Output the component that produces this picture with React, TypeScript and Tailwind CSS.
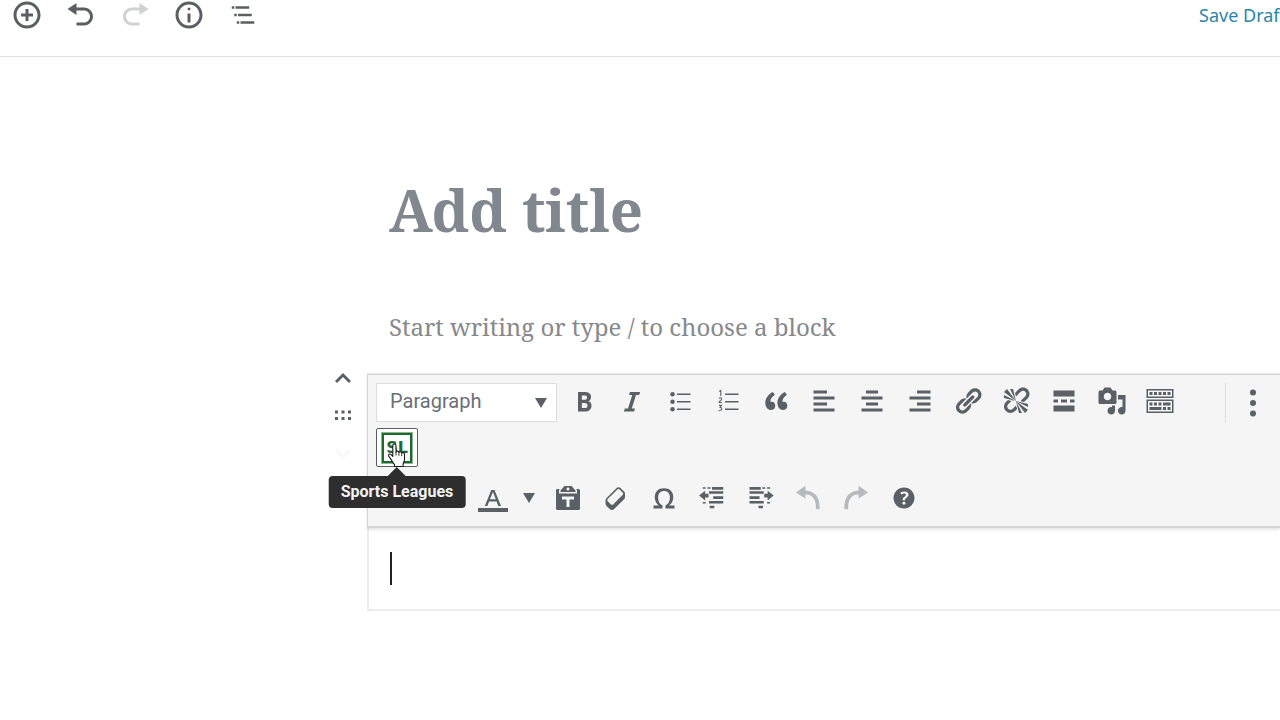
import type { ReactNode } from "react";

type IconProps = { children: ReactNode; box?: string; className?: string };

function Icon({ children, box = "0 0 20 20", className = "size-[30px]" }: IconProps) {
  return (
    <svg viewBox={box} className={className} fill="currentColor" aria-hidden="true">
      {children}
    </svg>
  );
}

function HeaderButton({ label, disabled, children }: { label: string; disabled?: boolean; children: ReactNode }) {
  return (
    <button
      type="button"
      aria-label={label}
      disabled={disabled}
      className="flex h-[30px] w-[54px] shrink-0 items-center justify-center text-[#5a5f63] disabled:text-[#d0d2d2]"
    >
      {children}
    </button>
  );
}

function ToolButton({ label, disabled, children }: { label: string; disabled?: boolean; children: ReactNode }) {
  return (
    <button
      type="button"
      aria-label={label}
      disabled={disabled}
      className="flex h-9 w-12 shrink-0 items-center justify-center text-[#5a6066] disabled:text-[#b6babd]"
    >
      {children}
    </button>
  );
}

const indentBars =
  "M3.800 2.900h2v1h-2zM7 2.900h2v1H7zM10 2.700h7.500v1.800H10zM8 5.500h9.500v1.700H8zM10.800 8.900h6.700v1.700h-6.700zM8 12h9.500v1.700H8zM3.800 12.600h2v1h-2zM8.500 15.200h3v1.700h-3zM1.400 8.400l4-3.300v2h2.300v2.600H5.400v2z";

const formatting: { label: string; icon: ReactNode }[] = [
  {
    label: "Bold",
    icon: (
      <path
        fillRule="evenodd"
        d="M6 4v13h4.54c1.37 0 2.46-.33 3.26-1 .8-.66 1.2-1.58 1.2-2.77 0-.84-.17-1.51-.51-2.01s-.9-.85-1.67-1.03v-.09c.57-.1 1.02-.4 1.36-.9s.51-1.13.51-1.91c0-1.14-.39-1.98-1.17-2.5C12.75 4.26 11.5 4 9.78 4H6zm2.57 5.15V6.26h1.36c.73 0 1.27.11 1.61.32.34.22.51.58.51 1.07 0 .54-.16.92-.47 1.15s-.82.35-1.51.35h-1.5zm0 2.19h1.6c1.44 0 2.16.53 2.16 1.61 0 .6-.17 1.05-.51 1.34s-.86.43-1.57.43H8.57v-3.38z"
      />
    ),
  },
  { label: "Italic", icon: <path d="M14.78 6h-2.13l-2.8 9h2.12l-.62 2H4.6l.62-2h2.14l2.8-9H8.03l.62-2h6.75z" /> },
  {
    label: "Bulleted list",
    icon: (
      <>
        <circle cx="5" cy="5.500" r="1.500" />
        <circle cx="5" cy="10.500" r="1.500" />
        <circle cx="5" cy="15.500" r="1.500" />
        <path d="M8 5h9v1H8zM8 10h9v1H8zM8 15h9v1H8z" />
      </>
    ),
  },
  {
    label: "Numbered list",
    icon: (
      <>
        <path d="M8 5h9v1H8zM8 10h9v1H8zM8 15h9v1H8z" />
        <path
          fill="none"
          stroke="currentColor"
          strokeWidth=".7"
          d="M4.200 3.700l1-.7v3.600M4 8.300c.4-.6 1.800-.6 1.800.3 0 .8-1.800 1.500-1.800 2.400h2M4 12.900h1.700l-1 1.300c1.600.1 1.600 2.500-.9 2.100"
        />
      </>
    ),
  },
  {
    label: "Blockquote",
    icon: (
      <path d="M9.49 13.22c0-.74-.2-1.38-.61-1.9-.62-.78-1.83-.88-2.53-.72-.29-1.65 1.11-3.75 2.92-4.65L7.88 4c-2.73 1.3-5.42 4.28-4.96 8.05C3.21 14.43 4.59 16 6.54 16c.85 0 1.56-.25 2.12-.75s.83-1.18.83-2.03zm8.05 0c0-.74-.2-1.38-.61-1.9-.63-.78-1.83-.88-2.53-.72-.29-1.65 1.11-3.75 2.92-4.65L15.93 4c-2.73 1.3-5.41 4.28-4.95 8.05.29 2.38 1.66 3.95 3.61 3.95.85 0 1.56-.25 2.12-.75s.83-1.18.83-2.03z" />
    ),
  },
  { label: "Align left", icon: <path d="M12 5V3H3v2h9zm5 4V7H3v2h14zm-5 4v-2H3v2h9zm5 4v-2H3v2h14z" /> },
  { label: "Align center", icon: <path d="M14 5V3H6v2h8zm3 4V7H3v2h14zm-3 4v-2H6v2h8zm3 4v-2H3v2h14z" /> },
  { label: "Align right", icon: <path d="M17 5V3H8v2h9zm0 4V7H3v2h14zm0 4v-2H8v2h9zm0 4v-2H3v2h14z" /> },
  {
    label: "Insert link",
    icon: (
      <path d="M17.74 2.76c1.68 1.69 1.68 4.41 0 6.1l-1.53 1.52c-1.12 1.12-2.7 1.47-4.14 1.09l2.62-2.61.76-.77.76-.76c.84-.84.84-2.2 0-3.04-.84-.85-2.2-.85-3.04 0l-.77.76-3.38 3.38c-.37-1.44-.02-3.02 1.1-4.14l1.52-1.53c1.69-1.68 4.42-1.68 6.1 0zM8.59 13.43l5.34-5.34c.42-.42.42-1.1 0-1.52-.44-.43-1.13-.39-1.53 0l-5.33 5.34c-.42.42-.42 1.1 0 1.52.44.43 1.13.39 1.52 0zm-.76 2.29l4.14-4.15c.38 1.44.03 3.02-1.09 4.14l-1.52 1.53c-1.69 1.68-4.41 1.68-6.1 0-1.68-1.68-1.68-4.42 0-6.1l1.53-1.52c1.12-1.12 2.7-1.47 4.14-1.1l-4.14 4.15c-.85.84-.85 2.2 0 3.05.84.84 2.2.84 3.04 0z" />
    ),
  },
  {
    label: "Remove link",
    icon: (
      <path d="M17.74 2.26c1.68 1.69 1.68 4.41 0 6.1l-1.53 1.52c-.32.33-.69.58-1.08.77L13 10l1.69-1.64.76-.77.76-.76c.84-.84.84-2.2 0-3.04-.84-.85-2.2-.85-3.04 0l-.77.76-.76.76L10 7l-.65-2.14c.19-.38.44-.75.77-1.07l1.52-1.53c1.69-1.68 4.42-1.68 6.1 0zM2 4l8 6-6-8zm4-2l4 8-2-8H6zM2 6l8 4-8-2V6zm7.36 7.69L10 13l.74 2.35-1.38 1.39c-1.69 1.68-4.41 1.68-6.1 0-1.68-1.68-1.68-4.42 0-6.1l1.39-1.38L7 10l-.69.64-1.52 1.53c-.85.84-.85 2.2 0 3.04.84.85 2.2.85 3.04 0zM18 16l-8-6 6 8zm-4 2l-4-8 2 8h2zm4-4l-8-4 8 2v2z" />
    ),
  },
  {
    label: "Insert read more tag",
    icon: <path d="M17 7V3H3v4h14zM6 11V9H3v2h3zm6 0V9H8v2h4zm5 0V9h-3v2h3zm0 6v-4H3v4h14z" />,
  },
  {
    label: "Add media",
    icon: (
      <path
        fillRule="evenodd"
        d="M13 11V4c0-.55-.45-1-1-1h-1.67L9 1H5L3.67 3H2c-.55 0-1 .45-1 1v7c0 .55.45 1 1 1h10c.55 0 1-.45 1-1zM7 4.5c1.38 0 2.5 1.12 2.5 2.5S8.38 9.5 7 9.5 4.5 8.38 4.5 7 5.62 4.5 7 4.5zM14 6h5v10.5c0 1.38-1.12 2.5-2.5 2.5S14 17.88 14 16.5s1.12-2.5 2.5-2.5c.17 0 .34.02.5.05V9h-3V6zm-4 8.05V13h2v3.5c0 1.38-1.12 2.5-2.5 2.5S7 17.88 7 16.5 8.12 14 9.5 14c.17 0 .34.02.5.05z"
      />
    ),
  },
  {
    label: "Toolbar toggle",
    icon: (
      <path
        fillRule="evenodd"
        d="M19 2v6H1V2h18zm-1 5V3H2v4h16zM5 4v2H3V4h2zm3 0v2H6V4h2zm3 0v2H9V4h2zm3 0v2h-2V4h2zm3 0v2h-2V4h2zM19 9v9H1V9h18zm-1 8v-7H2v7h16zM5 11v2H3v-2h2zm3 0v2H6v-2h2zm3 0v2H9v-2h2zm6 0v2h-5v-2h5zm-6 3v2H3v-2h8zm3 0v2h-2v-2h2zm3 0v2h-2v-2h2z"
      />
    ),
  },
];

const advanced: { label: string; disabled?: boolean; icon: ReactNode }[] = [
  {
    label: "Paste as text",
    icon: (
      <path
        fillRule="evenodd"
        d="M12.38 2L15 5v1H5V5l2.64-3h4.74zM10 5c.55 0 1-.44 1-1 0-.55-.45-1-1-1s-1 .45-1 1c0 .56.45 1 1 1zm5.45-1H17c.55 0 1 .45 1 1v12c0 .56-.45 1-1 1H3c-.55 0-1-.44-1-1V5c0-.55.45-1 1-1h1.55L4 4.63V7h12V4.63zM14 11V9H6v2h3v5h2v-5h3z"
      />
    ),
  },
  {
    label: "Clear formatting",
    icon: (
      <path
        fillRule="evenodd"
        d="M14.29 4.59l1.1 1.11c.41.4.61.94.61 1.47v2.12c0 .53-.2 1.07-.61 1.47l-6.63 6.63c-.4.41-.94.61-1.47.61s-1.07-.2-1.47-.61l-1.11-1.1-1.1-1.11c-.41-.4-.61-.94-.61-1.47v-2.12c0-.54.2-1.07.61-1.48l6.63-6.62c.4-.41.94-.61 1.47-.61s1.06.2 1.47.61zm-6.21 9.7l6.42-6.42c.39-.39.39-1.03 0-1.43L12.36 4.3c-.19-.19-.45-.29-.72-.29s-.52.1-.71.29l-6.42 6.42c-.39.4-.39 1.04 0 1.43l2.14 2.14c.38.38 1.04.38 1.43 0z"
      />
    ),
  },
  {
    label: "Special character",
    icon: (
      <path d="M10 5.4c1.27 0 2.24.36 2.91 1.08.66.71 1 1.76 1 3.13 0 1.28-.23 2.37-.69 3.27-.47.89-1.27 1.52-2.22 2.12v2h6v-2h-3.69c.92-.64 1.62-1.34 2.12-2.34.49-1.01.74-2.13.74-3.35 0-1.78-.55-3.19-1.65-4.22S11.92 3.54 10 3.54s-3.43.53-4.52 1.57c-1.1 1.04-1.65 2.44-1.65 4.2 0 1.21.24 2.31.73 3.33.48 1.01 1.19 1.71 2.1 2.36H3v2h6v-2c-.98-.64-1.8-1.28-2.24-2.17-.45-.89-.67-1.96-.67-3.22 0-1.37.33-2.41 1-3.13C7.75 5.76 8.72 5.4 10 5.4z" />
    ),
  },
  { label: "Decrease indent", icon: <path d={indentBars} /> },
  { label: "Increase indent", icon: <path d={indentBars} transform="translate(20.500) scale(-1 1)" /> },
  {
    label: "Undo",
    disabled: true,
    icon: (
      <>
        <path d="M2 6.300L8.300 1.800v8.600z" />
        <path d="M7.500 6.200c6.200 0 9.300 3.600 9 11.300" fill="none" stroke="currentColor" strokeWidth="2.500" />
      </>
    ),
  },
  {
    label: "Redo",
    disabled: true,
    icon: (
      <>
        <path d="M18 6.300l-6.300-4.500v8.600z" />
        <path d="M12.500 6.200c-6.200 0-9.300 3.600-9 11.300" fill="none" stroke="currentColor" strokeWidth="2.500" />
      </>
    ),
  },
  {
    label: "Keyboard shortcuts",
    icon: (
      <path
        fillRule="evenodd"
        d="M17 10c0-3.870-3.140-7-7-7-3.870 0-7 3.130-7 7s3.130 7 7 7c3.860 0 7-3.130 7-7zm-6.300 1.480H9.140v-.43c0-.38.08-.7.24-.98s.46-.57.88-.89c.41-.29.68-.53.81-.71.14-.18.2-.39.2-.62 0-.25-.09-.44-.28-.58-.19-.13-.45-.19-.79-.19-.58 0-1.250.19-2 .57l-.64-1.280c.87-.49 1.800-.74 2.770-.74.81 0 1.450.2 1.920.58.48.39.71.91.71 1.550 0 .43-.09.8-.29 1.110-.19.32-.57.67-1.110 1.060-.38.28-.61.49-.71.63-.1.15-.15.34-.15.57v.35zm-1.470 2.740c-.18-.17-.27-.42-.27-.73 0-.33.08-.58.26-.75s.43-.25.77-.25c.32 0 .57.09.75.26s.27.42.27.74c0 .3-.09.55-.27.72-.18.18-.43.27-.75.27-.33 0-.58-.09-.76-.26z"
      />
    ),
  },
];

function EditorHeader() {
  return (
    <header className="flex h-[57px] items-start overflow-hidden border-b border-[#dfe2e4]">
      <HeaderButton label="Add block">
        <Icon>
          <path d="M10 1c-5 0-9 4-9 9s4 9 9 9 9-4 9-9-4-9-9-9zm0 16c-3.900 0-7-3.100-7-7s3.100-7 7-7 7 3.100 7 7-3.100 7-7 7zm1-11H9v3H6v2h3v3h2v-3h3V9h-3V6z" />
        </Icon>
      </HeaderButton>
      <HeaderButton label="Undo">
        <Icon>
          <path d="M12 5H7V2L1 6l6 4V7h5c2.200 0 4 1.800 4 4s-1.800 4-4 4H7v2h5c3.300 0 6-2.700 6-6s-2.700-6-6-6z" />
        </Icon>
      </HeaderButton>
      <HeaderButton label="Redo" disabled>
        <Icon>
          <path d="M8 5h5V2l6 4-6 4V7H8c-2.200 0-4 1.800-4 4s1.800 4 4 4h5v2H8c-3.300 0-6-2.700-6-6s2.700-6 6-6z" />
        </Icon>
      </HeaderButton>
      <HeaderButton label="Content structure">
        <Icon>
          <path d="M9 15h2V9H9v6zm1-10c-.5 0-1 .5-1 1s.5 1 1 1 1-.5 1-1-.5-1-1-1zm0-4c-5 0-9 4-9 9s4 9 9 9 9-4 9-9-4-9-9-9zm0 16c-3.900 0-7-3.100-7-7s3.100-7 7-7 7 3.100 7 7-3.100 7-7 7z" />
        </Icon>
      </HeaderButton>
      <HeaderButton label="Block navigation">
        <Icon box="0 0 24 24">
          <path d="M5 5H3v2h2V5zm3 8h11v-2H8v2zm9-8H6v2h11V5zM7 11H5v2h2v-2zm0 8h2v-2H7v2zm3-2v2h11v-2H10z" />
        </Icon>
      </HeaderButton>
      <div className="-mr-[6px] ml-auto shrink-0">
        <button type="button" className="font-['Noto_Sans','Open_Sans',sans-serif] text-lg leading-[30px] text-[#2a86a8]">
          Save Draft
        </button>
      </div>
    </header>
  );
}

function BlockMover() {
  return (
    <div className="flex w-10 shrink-0 flex-col items-center pr-2 text-[#5a6066]">
      <button type="button" aria-label="Move up" className="flex h-[10px] w-8 items-center justify-center">
        <Icon box="0 0 18 10" className="h-[10px] w-[18px]">
          <path d="M9 0l8 8-2 2-6-6-6 6-2-2z" />
        </Icon>
      </button>
      <button type="button" aria-label="Drag block" className="mt-[22px] flex h-5 w-8 items-center justify-center">
        <Icon box="0 0 16 12" className="h-3 w-4">
          <path d="M0 1.500h3v3H0zM6.500 1.500h3v3h-3zM13 1.500h3v3h-3zM0 8h3v3H0zM6.500 8h3v3h-3zM13 8h3v3h-3z" />
        </Icon>
      </button>
      <button type="button" aria-label="Move down" disabled className="mt-6 flex h-[10px] w-8 items-center justify-center text-[#f8f8f8]">
        <Icon box="0 0 18 10" className="h-[10px] w-[18px]">
          <path d="M9 10L1 2l2-2 6 6 6-6 2 2z" />
        </Icon>
      </button>
    </div>
  );
}

function SportsLeaguesButton() {
  return (
    <div className="relative w-[42px]">
      <button
        type="button"
        aria-describedby="sl-tip"
        className="flex h-[39px] w-[42px] items-center justify-center rounded-[2px] border border-[#555d66] bg-white"
      >
        <span className="flex size-[30px] items-center justify-center border-2 border-[#1d6b2c] font-['DejaVu_Sans',sans-serif] text-base font-bold text-[#1d6b2c] outline-1 outline-[#8fb597]">
          SL
        </span>
      </button>
      <svg viewBox="0 0 20 26" className="absolute left-[11px] top-[15px] z-20 h-[26px] w-5" aria-hidden="true">
        <path
          d="M5.800 2.700c0-2.400 3.200-2.400 3.200 0v6.200c.6-1.200 2.700-1 2.900.5.700-1.100 2.500-.8 2.800.7.900-.9 2.800-.3 2.800 1.300v5.200c0 1.800-1 3-1.400 4.400v2.500H7.600v-1.900c-1.600-1.300-2.400-3.400-3.600-5.200l-2.300-3.300c-.9-1.800 1.200-2.800 2.400-1.500l1.700 1.800z"
          fill="#fff"
          stroke="#1a1a1a"
          strokeWidth="1.100"
          strokeLinejoin="round"
        />
        <path d="M9 9v3.500M11.900 9.600v3.200M14.700 10.500v2.600" stroke="#1a1a1a" strokeWidth=".9" />
      </svg>
      <div id="sl-tip" role="tooltip" className="absolute left-1/2 top-full z-10 flex -translate-x-1/2 flex-col items-center">
        <svg viewBox="0 0 18 9" className="h-[9px] w-[18px]" aria-hidden="true">
          <path d="M9 0l9 9H0z" fill="#2e2e2e" />
        </svg>
        <span className="rounded-[4px] bg-[#2e2e2e] px-3 font-[Roboto,sans-serif] text-base font-bold leading-8 whitespace-nowrap text-[#f4f4f4]">
          Sports Leagues
        </span>
      </div>
    </div>
  );
}

function ClassicBlock() {
  return (
    <section aria-label="Classic block" className="min-w-0 flex-1 border-2 border-r-0 border-[#ebeded]">
      <div
        role="toolbar"
        aria-label="Formatting"
        className="-ml-0.5 -mt-px border-b-2 border-l border-t border-[#d2d4d5] bg-[#f5f5f5] pb-1 pl-2 pt-2 shadow-[0_2px_3px_rgba(0,0,0,0.1)]"
      >
        <div className="flex h-[39px] items-start">
          <div className="relative mr-[3px] shrink-0">
            <select
              aria-label="Text style"
              defaultValue="Paragraph"
              className="block h-[39px] w-[181px] appearance-none border border-[#dddddd] bg-white pb-1 pl-[13px] font-[Roboto,sans-serif] text-xl leading-6 text-[#6a7077]"
            >
              <option>Paragraph</option>
              <option>Heading 1</option>
              <option>Heading 2</option>
            </select>
            <svg viewBox="0 0 12 10" className="pointer-events-none absolute right-[10px] top-[15px] h-[10px] w-3" aria-hidden="true">
              <path d="M0 0h12L6 10z" fill="#5a6066" />
            </svg>
          </div>
          {formatting.map((tool) => (
            <ToolButton key={tool.label} label={tool.label}>
              <Icon>{tool.icon}</Icon>
            </ToolButton>
          ))}
          <button
            type="button"
            aria-label="More options"
            className="ml-auto flex h-10 w-[55px] shrink-0 items-center justify-center border-l border-[#dddfe0] text-[#5a6066]"
          >
            <Icon box="0 0 8 30" className="h-[30px] w-2">
              <circle cx="4" cy="4.500" r="3" />
              <circle cx="4" cy="15" r="3" />
              <circle cx="4" cy="25.500" r="3" />
            </Icon>
          </button>
        </div>
        <div className="mt-[6px] flex">
          <SportsLeaguesButton />
        </div>
        <div className="mt-[7px] flex h-12 items-center pl-[97px]">
          <button type="button" aria-label="Text color" className="flex h-9 w-10 items-center justify-center text-[#5a6066]">
            <Icon box="0 0 30 30">
              <path fillRule="evenodd" d="M13.300 7h3.200L23 23h-2.700l-1.700-4.500h-7.500L9.400 23H6.800zM12 16.200h5.800L14.900 9z" />
              <path d="M0 25h30v4H0z" />
            </Icon>
          </button>
          <button type="button" aria-label="Choose color" className="flex h-9 w-[31px] items-center justify-center text-[#5a6066]">
            <Icon box="0 0 12 10" className="h-[10px] w-3">
              <path d="M0 0h12L6 10z" />
            </Icon>
          </button>
          {advanced.map((tool) => (
            <ToolButton key={tool.label} label={tool.label} disabled={tool.disabled}>
              <Icon>{tool.icon}</Icon>
            </ToolButton>
          ))}
        </div>
      </div>
      <div role="textbox" aria-label="Classic text" className="px-[21px] py-6">
        <span className="block h-[33px] w-[2px] bg-[#222222]" />
      </div>
    </section>
  );
}

export default function App() {
  return (
    <div className="min-h-screen overflow-x-hidden bg-white">
      <EditorHeader />
      <main className="pt-[104px]">
        <div className="pl-[389px] font-['Noto_Serif','DejaVu_Serif_Condensed','DejaVu_Serif',serif]">
          <input
            type="text"
            aria-label="Add title"
            placeholder="Add title"
            className="block h-24 w-full text-[58px] font-bold text-[#32373c] outline-none placeholder:text-[#81878f]"
          />
          <input
            type="text"
            aria-label="Add block"
            placeholder="Start writing or type / to choose a block"
            className="mt-[49px] block h-10 w-full text-2xl text-[#32373c] outline-none placeholder:text-[#86898b]"
          />
        </div>
        <div className="mt-[27px] flex pl-[327px]">
          <BlockMover />
          <ClassicBlock />
        </div>
      </main>
    </div>
  );
}
